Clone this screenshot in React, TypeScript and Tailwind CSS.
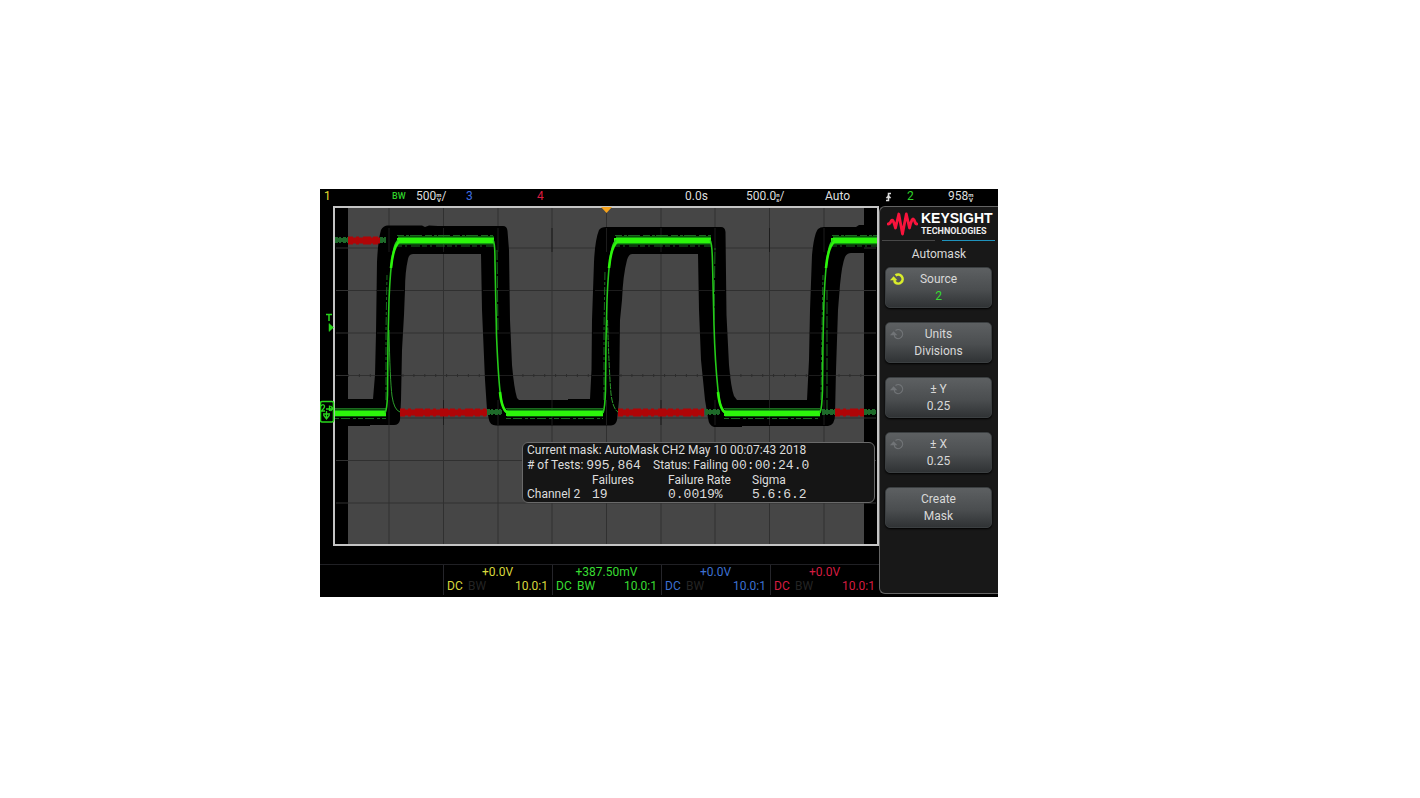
import React from "react";

const verticals = [389, 443.5, 498, 552, 606.5, 661, 715, 769.5, 824];
const horizontals = [248, 290.5, 333, 375.5, 418, 460.5, 503];

const maskBand =
  "M334 399H373L375 375L376 333L377 262Q378 240 381 230Q383 226 387 225.500H422L425 227L429 225.500L438 226H503Q507 226 507.500 231L509 250L510 320L512 365Q514 388 517 398L519 400H568V399H590L591.500 370L592 320L594 262Q595 240 599 230Q601 227 606 227H721Q725 227 725.500 232L726.500 315L729 365Q731 388 734 396L737 400H807L809 360L810 310L812 255Q814 234 818 229Q820 227 824 227H856L859 225H864V253H851Q847 253 845 257Q842 264 840 285L838 310L836 370L835 415Q835 425 828 426H742V427H714Q709 426 708 418L705 400L701 360L699 310L698 254H633Q629 253 627 260Q623 275 622 300L620 320L619 400L617 420Q616 425 611 425.500H496Q490 425 489 420L487 410L485 380L482 310L481 254H413Q409 254 408 259Q405 272 405 290L404 315L402 350L401 400L400 420Q399 425 394 425H370V426H334Z";

const risingEdges = [
  "M385 413Q387 410 387.500 395L388 340L389 300Q391 252 396 243L398 240",
  "M603 413Q605 408 605.500 390L606 340L607 300Q609 252 614 243L616 240",
  "M820 413Q822 408 822.500 390L823 340L824 300Q826 252 831 243L833 240",
];

const fallingEdges = [
  "M493 240Q495 242 495 262L496.500 335Q498 372 500 391Q502 410 507 413",
  "M710 240Q712 242 712.500 262L714 325Q715 362 718 390Q720 410 725 413",
];

function ScopePlot() {
  return (
    <svg viewBox="320 206 559 340" className="block w-full" role="img" aria-label="Channel 2 waveform with mask">
      <rect x="320" y="206" width="559" height="340" fill="#000" />
      <rect x="348" y="208" width="516" height="337" fill="#464646" />
      <g stroke="#303030" strokeWidth="1">
        {verticals.map((x) => (
          <path key={x} d={`M${x} 208V545`} />
        ))}
        {horizontals.map((y) => (
          <path key={y} d={`M336 ${y}H876`} />
        ))}
      </g>
      <path d="M348 375.5H864" stroke="#2c2c2c" strokeWidth="3" strokeDasharray="1 9.9" />
      <path d={maskBand} fill="#000" />
      <g stroke="#1c1c1c" strokeWidth="1">
        {verticals.map((x) => (
          <path key={x} d={`M${x} 228V252M${x} 400V425`} />
        ))}
        <path d="M377 290.5H404M377 333H403M375 375.5H401M483 290.5H509M483 333H510M485 375.5H513M595 290.5H622M593 333H619M592 375.5H619M699 290.5H725M700 333H727M703 375.5H730M811 290.5H839M810 333H837M809 375.5H836" />
      </g>
      <g stroke="#1a6b20" strokeWidth="1" fill="none">
        <path d="M397 235.500H494M615 235.500H711M832 235.500H878" strokeDasharray="7 2 3 1 12 3" />
        <path d="M397 246H494M615 246H711M832 246H878" strokeDasharray="5 3 2 4 9 2" />
        <path d="M334 418.500H386M506 418.500H603M724 418.500H820" strokeDasharray="5 2 9 3 3 2" />
        <path d="M334 408.5H386M506 408.5H603M724 408.5H820" />
        <path d="M386 400L386 330L387 275M604 400L604 330L605 270M821 400L822 330L823 275" strokeDasharray="8 2 3 2" />
        <path d="M714 320L715 248M498 330L497 250M827 412L827 290" strokeDasharray="12 2" />
      </g>
      <g stroke="#1e6a2a" strokeWidth="4">
        <path d="M335 240H348M380 240H386M335 412H386M487 412H502M705 412H720M822 412H835M864 412H876" />
        <path d="M335 240H348M380 240H386M487 412H502M705 412H720M822 412H835M864 412H876" strokeWidth="6" strokeDasharray="3 1 2 2" />
      </g>
      <g stroke="#2c9d2c" strokeWidth="1" fill="none">
        <path d="M389 330Q390 380 392 396Q394 410 400 412" />
        <path d="M607.500 320Q609 370 611 394Q613 409 618 412" strokeDasharray="6 1" />
      </g>
      <g stroke="#b00507" strokeWidth="6">
        <path d="M348 240.5H380M400 412.5H487M618 412.5H704M835 412.5H864" />
        <path d="M348 240.5H380M400 412.5H487M618 412.5H704M835 412.5H864" strokeWidth="8" strokeDasharray="5 3 3 4 8 2" />
      </g>
      <g stroke="#159b12" strokeWidth="8">
        <path d="M398 240.5H494M616 240.5H711M833 240.5H878" />
        <path d="M334 413H386M507 413H603M725 413H820" strokeWidth="7" />
      </g>
      <g stroke="#2cf50b" strokeWidth="5">
        <path d="M397 240.5H494M614 240.5H711M831 240.5H878M334 413.5H386M506 413.5H603M724 413.5H820" />
      </g>
      <g stroke="#25c91a" strokeWidth="1.6" fill="none" strokeLinejoin="round">
        {risingEdges.map((d) => (
          <path key={d} d={d} />
        ))}
        {fallingEdges.map((d) => (
          <path key={d} d={d} />
        ))}
      </g>
      <path
        d="M391 268Q393 246 400 241M609 268Q611 246 618 241M826 268Q828 246 835 241M500 392Q502 412 509 413M718 392Q720 412 727 413"
        stroke="#2cf50b"
        strokeWidth="2.6"
        fill="none"
      />
      <path d="M334 207H878V545H334Z" fill="none" stroke="#c4c4c4" strokeWidth="2" />
      <path d="M601 207H612L606.5 213Z" fill="#f5a21b" />
      <g stroke="#29d61c" strokeWidth="1.5" fill="none">
        <path d="M326 314.5H332M329 314.5V321" />
        <path d="M329 323.500L333.500 327.500L329 331.500Z" fill="#29d61c" strokeWidth="0.5" />
        <rect x="320.500" y="401.500" width="13" height="20.500" rx="1.500" />
        <path d="M321 406C323 403.500 325.500 405 324 408L321.500 411H325M326 409H332.500M329.500 405.500V411M330.500 406L333 408.500L330.500 411M326.500 411V418M323 414H330M323.500 415L326.500 419L329.500 415" strokeWidth="1.300" />
      </g>
    </svg>
  );
}

function StackedUnit({ top, bottom }: { top: string; bottom: string }) {
  return (
    <span className="inline-flex flex-col items-center text-[6px] leading-[5px] font-bold">
      <span>{top}</span>
      <span>{bottom}</span>
    </span>
  );
}

function TopBar() {
  return (
    <header className="grid h-[17px] grid-cols-[68px_24px_50px_71px_148px_61px_79px_60px_22px_41px_1fr] items-start pl-1 text-xs leading-[15px] whitespace-nowrap text-[#dedede]">
      <span className="text-[#e0dc2b]">1</span>
      <span className="text-[9px] font-medium text-[#2fd22a]">BW</span>
      <span className="flex items-center">500<StackedUnit top="m" bottom="V" />/</span>
      <span className="text-[#3f6fe0]">3</span>
      <span className="text-[#dc1c40]">4</span>
      <span>0.0s</span>
      <span className="flex items-center">500.0<StackedUnit top="n" bottom="s" />/</span>
      <span>Auto</span>
      <svg viewBox="0 0 8 12" className="mt-0.5 h-3 w-2" fill="none" stroke="#dedede" strokeWidth="1.500" aria-label="Rising edge trigger">
        <path d="M6 2.500H3.500V9.500H1" />
        <path d="M1 7L3.500 4L6 7Z" fill="#dedede" strokeWidth="0.500" />
      </svg>
      <span className="text-[#2fd22a]">2</span>
      <span className="flex items-center">958<StackedUnit top="m" bottom="V" /></span>
    </header>
  );
}

function MaskStatistics() {
  const digits = "font-['Liberation_Mono',monospace] text-[13px]";
  return (
    <section className="absolute top-[236px] right-1 left-[202px] rounded-md border border-[#6a6a6a] bg-[#151515] pl-1 text-xs leading-[15px] whitespace-nowrap text-[#dcdcdc]">
      <p className="h-[15px]">Current mask: AutoMask CH2 May 10 00:07:43 2018</p>
      <p className="flex h-[15px]">
        <span className="w-[126px]"># of Tests: <span className={digits}>995,864</span></span>
        <span>Status: Failing <span className={digits}>00:00:24.0</span></span>
      </p>
      <table className="table-fixed border-collapse text-left">
        <thead>
          <tr className="h-[14px] leading-[14px]">
            <th className="w-[65px] p-0" />
            <th className="w-[76px] p-0 font-normal">Failures</th>
            <th className="w-[84px] p-0 font-normal">Failure Rate</th>
            <th className="p-0 font-normal">Sigma</th>
          </tr>
        </thead>
        <tbody>
          <tr className="h-[15px] align-baseline leading-[14px]">
            <th className="p-0 font-normal">Channel 2</th>
            <td className="p-0 font-['Liberation_Mono',monospace] text-[13px]">19</td>
            <td className="p-0 font-['Liberation_Mono',monospace] text-[13px]">0.0019%</td>
            <td className="p-0 font-['Liberation_Mono',monospace] text-[13px]">5.6:6.2</td>
          </tr>
        </tbody>
      </table>
    </section>
  );
}

const channels = [
  { id: 1, offset: "+0.0V", color: "text-[#d8d83c]", limited: false },
  { id: 2, offset: "+387.50mV", color: "text-[#38dc32]", limited: true },
  { id: 3, offset: "+0.0V", color: "text-[#3d70d2]", limited: false },
  { id: 4, offset: "+0.0V", color: "text-[#d61c40]", limited: false },
];

function ChannelBar() {
  return (
    <footer className="mt-[18px] grid h-[33px] grid-cols-[123px_repeat(4,minmax(0,1fr))] border-t border-[#202024] text-xs whitespace-nowrap">
      <div />
      {channels.map((c) => (
        <div key={c.id} className={`${c.color} mb-[2px] border-l border-[#25252a] pr-1 pl-[3px] leading-[14px]`}>
          <p className="text-center">{c.offset}</p>
          <p className="flex">
            <span className="w-[21px]">DC</span>
            <span className={c.limited ? "" : "text-[#242424]"}>BW</span>
            <span className="ml-auto">10.0:1</span>
          </p>
        </div>
      ))}
    </footer>
  );
}

function KnobIcon({ active }: { active: boolean }) {
  return (
    <svg
      viewBox="0 0 16 14"
      className={active ? "absolute top-1 left-1 h-3.5 w-4 text-[#d9ec2b]" : "absolute top-1 left-1 h-3.5 w-4 text-[#717477]"}
      fill="none"
      stroke="currentColor"
      strokeWidth={active ? 2.6 : 1.2}
      aria-hidden="true"
    >
      <path d="M5.500 3.400A4.500 4.500 0 1 1 5 10.300L4.300 8" />
      <path d="M0 8.200L3.600 4.200L7.400 8.200Z" fill="currentColor" stroke="none" />
    </svg>
  );
}

const softkeys = [
  { title: "Source", value: "2", icon: "active" },
  { title: "Units", value: "Divisions", icon: "idle" },
  { title: "± Y", value: "0.25", icon: "idle" },
  { title: "± X", value: "0.25", icon: "idle" },
  { title: "Create", value: "Mask", icon: "none" },
];

function SoftkeyMenu() {
  return (
    <aside className="mb-[3px] flex flex-col rounded-l-md border border-r-0 border-[#656565] bg-[#181818] pt-[3px] text-xs text-[#d8d8d8]">
      <div className="flex h-[30px] items-start gap-[3px] pl-[7px]">
        <svg viewBox="0 0 31 26" className="h-[26px] w-[31px] shrink-0" fill="none" stroke="#f8143c" strokeWidth="2.800" strokeLinejoin="round" strokeLinecap="round" aria-hidden="true">
          <path d="M1 14Q3 14 4.200 11Q5.500 8.500 7 13L8.500 18L11.800 4L15.500 24L19.300 4L22.500 18Q23.500 13 25 10Q26.500 7.500 27.800 11.500Q28.500 14 30 14" />
        </svg>
        <div>
          <p className="pt-px font-['Liberation_Sans',sans-serif] text-[14px] leading-[15px] font-bold text-white">KEYSIGHT</p>
          <p className="text-[9px] leading-[10px] font-bold text-[#ececec]">TECHNOLOGIES</p>
        </div>
      </div>
      <div className="mr-[3px] ml-[2px] flex gap-[7px]">
        <div className="h-px flex-1 bg-[#484848]" />
        <div className="h-px flex-1 bg-[#1f93bd]" />
      </div>
      <h1 className="h-[26px] pt-[5px] text-center leading-4">Automask</h1>
      <div className="mr-1.5 ml-[5px] flex flex-col gap-[14px]">
        {softkeys.map((key) => (
          <button
            key={key.title}
            type="button"
            className="relative h-[41px] rounded-[5px] border border-[#3b3f41] bg-linear-to-b from-[#5d6062] via-[#4b4e50] via-55% to-[#303335] text-center leading-[17px] shadow-[0_1px_2px_#000]"
          >
            {key.icon !== "none" && <KnobIcon active={key.icon === "active"} />}
            <span className="block">{key.title}</span>
            <span className={key.icon === "active" ? "block text-[#38dc32]" : "block"}>{key.value}</span>
          </button>
        ))}
      </div>
    </aside>
  );
}

export default function App() {
  return (
    <main className="min-h-screen bg-white pt-[189px] pl-80 font-[Roboto,'Liberation_Sans',sans-serif]">
      <div className="w-full max-w-[678px] bg-black">
        <TopBar />
        <div className="grid grid-cols-[minmax(0,1fr)_119px]">
          <div>
            <div className="relative">
              <ScopePlot />
              <MaskStatistics />
            </div>
            <ChannelBar />
          </div>
          <SoftkeyMenu />
        </div>
      </div>
    </main>
  );
}
